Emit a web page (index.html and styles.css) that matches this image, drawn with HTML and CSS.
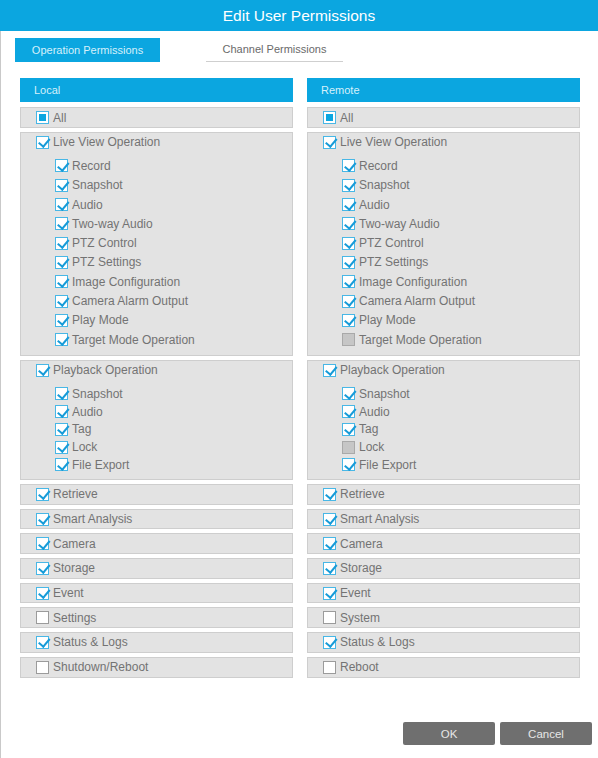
FILE: index.html
```html
<!DOCTYPE html>
<html lang="en">
<head>
  <meta charset="UTF-8" />
  <title>Edit User Permissions</title>
  <link rel="stylesheet" href="styles.css">
</head>
<body>

<div class="dialog">
  <header class="title">Edit User Permissions</header>

  <nav class="tabs">
    <span class="tab active">Operation Permissions</span>
    <span class="tab">Channel Permissions</span>
  </nav>

  <main class="columns">
    <!-- Local -->
    <section class="col">
      <div class="col-head">Local</div>
      <div class="box row"><span class="cb part"></span>All</div>

      <div class="box group live">
        <div class="item"><span class="cb on"></span>Live View Operation</div>
        <ul class="subs">
          <li class="item"><span class="cb on"></span>Record</li>
          <li class="item"><span class="cb on"></span>Snapshot</li>
          <li class="item"><span class="cb on"></span>Audio</li>
          <li class="item"><span class="cb on"></span>Two-way Audio</li>
          <li class="item"><span class="cb on"></span>PTZ Control</li>
          <li class="item"><span class="cb on"></span>PTZ Settings</li>
          <li class="item"><span class="cb on"></span>Image Configuration</li>
          <li class="item"><span class="cb on"></span>Camera Alarm Output</li>
          <li class="item"><span class="cb on"></span>Play Mode</li>
          <li class="item"><span class="cb on"></span>Target Mode Operation</li>
        </ul>
      </div>

      <div class="box group playback">
        <div class="item"><span class="cb on"></span>Playback Operation</div>
        <ul class="subs">
          <li class="item"><span class="cb on"></span>Snapshot</li>
          <li class="item"><span class="cb on"></span>Audio</li>
          <li class="item"><span class="cb on"></span>Tag</li>
          <li class="item"><span class="cb on"></span>Lock</li>
          <li class="item"><span class="cb on"></span>File Export</li>
        </ul>
      </div>

      <div class="box row"><span class="cb on"></span>Retrieve</div>
      <div class="box row"><span class="cb on"></span>Smart Analysis</div>
      <div class="box row"><span class="cb on"></span>Camera</div>
      <div class="box row"><span class="cb on"></span>Storage</div>
      <div class="box row"><span class="cb on"></span>Event</div>
      <div class="box row"><span class="cb"></span>Settings</div>
      <div class="box row"><span class="cb on"></span>Status &amp; Logs</div>
      <div class="box row"><span class="cb"></span>Shutdown/Reboot</div>
    </section>

    <!-- Remote -->
    <section class="col">
      <div class="col-head">Remote</div>
      <div class="box row"><span class="cb part"></span>All</div>

      <div class="box group live">
        <div class="item"><span class="cb on"></span>Live View Operation</div>
        <ul class="subs">
          <li class="item"><span class="cb on"></span>Record</li>
          <li class="item"><span class="cb on"></span>Snapshot</li>
          <li class="item"><span class="cb on"></span>Audio</li>
          <li class="item"><span class="cb on"></span>Two-way Audio</li>
          <li class="item"><span class="cb on"></span>PTZ Control</li>
          <li class="item"><span class="cb on"></span>PTZ Settings</li>
          <li class="item"><span class="cb on"></span>Image Configuration</li>
          <li class="item"><span class="cb on"></span>Camera Alarm Output</li>
          <li class="item"><span class="cb on"></span>Play Mode</li>
          <li class="item"><span class="cb off"></span>Target Mode Operation</li>
        </ul>
      </div>

      <div class="box group playback">
        <div class="item"><span class="cb on"></span>Playback Operation</div>
        <ul class="subs">
          <li class="item"><span class="cb on"></span>Snapshot</li>
          <li class="item"><span class="cb on"></span>Audio</li>
          <li class="item"><span class="cb on"></span>Tag</li>
          <li class="item"><span class="cb off"></span>Lock</li>
          <li class="item"><span class="cb on"></span>File Export</li>
        </ul>
      </div>

      <div class="box row"><span class="cb on"></span>Retrieve</div>
      <div class="box row"><span class="cb on"></span>Smart Analysis</div>
      <div class="box row"><span class="cb on"></span>Camera</div>
      <div class="box row"><span class="cb on"></span>Storage</div>
      <div class="box row"><span class="cb on"></span>Event</div>
      <div class="box row"><span class="cb"></span>System</div>
      <div class="box row"><span class="cb on"></span>Status &amp; Logs</div>
      <div class="box row"><span class="cb"></span>Reboot</div>
    </section>
  </main>

  <footer class="actions">
    <button type="button">OK</button>
    <button type="button">Cancel</button>
  </footer>
</div>

</body>
</html>
```

FILE: styles.css
```css
* {
  box-sizing: border-box;
}

body {
  margin: 0;
  background: #fff;
  font-family: 'Liberation Sans', Arial, sans-serif;
  color: #737373;
}

.dialog {
  height: 758px;
  display: flex;
  flex-direction: column;
  border-left: 1px solid #c9c9c9;
}

/* Barra de titulo */
.title {
  height: 31px;
  line-height: 31px;
  margin-left: -1px;
  background: #0ba6e0;
  color: #fff;
  text-align: center;
  font-size: 15.5px;
}

/* Pestañas */
.tabs {
  display: flex;
  gap: 46px;
  margin-top: 7px;
  padding-left: 14px;
}

.tab {
  height: 24px;
  line-height: 23px;
  text-align: center;
  font-size: 11px;
  color: #6a6a6a;
  width: 137px;
  border-bottom: 1px solid #cfcfcf;
}

.tab.active {
  width: 145px;
  background: #0ba6e0;
  color: #d6f0fb;
  border-bottom: none;
  line-height: 24px;
}

/* Columnas */
.columns {
  display: grid;
  grid-template-columns: 273px 273px;
  column-gap: 14px;
  margin-top: 16px;
  padding-left: 19px;
}

.col-head {
  height: 24px;
  line-height: 24px;
  padding-left: 14px;
  background: #0ba6e0;
  color: #d6f0fb;
  font-size: 11px;
}

.box {
  background: #e3e3e3;
  border: 1px solid #cecece;
  padding-left: 15px;
  font-size: 12px;
}

.box.row {
  height: 20.7px;
  margin-top: 4px;
  display: flex;
  align-items: center;
}

.col-head + .box.row {
  margin-top: 5px;
  height: 21px;
}

.group {
  margin-top: 4px;
}

.group .item {
  display: flex;
  align-items: center;
}

.group > .item {
  height: 18px;
}

.subs {
  list-style: none;
  margin: 0;
  padding: 0 0 0 19px;
}

.live {
  height: 224px;
}

.live .subs {
  margin-top: 5.3px;
}

.live .subs .item {
  height: 19.3px;
}

.playback {
  height: 120px;
}

.playback .subs {
  margin-top: 6.1px;
}

.playback .subs .item {
  height: 17.75px;
}

/* Checkboxes */
.cb {
  position: relative;
  flex: none;
  width: 13px;
  height: 13px;
  margin-right: 4px;
  background: #fff;
  border: 1px solid #9b9b9b;
}

.cb.on,
.cb.part {
  border-color: #48b7e6;
}

.cb.on::after {
  content: '';
  position: absolute;
  left: 3.5px;
  top: -0.5px;
  width: 4.5px;
  height: 8.5px;
  border-right: 2.2px solid #169bd8;
  border-bottom: 2.2px solid #169bd8;
  transform: rotate(40deg);
}

.cb.part::after {
  content: '';
  position: absolute;
  left: 2px;
  top: 2px;
  width: 7px;
  height: 7px;
  background: #0ba6e0;
}

.cb.off {
  background: #c6c6c6;
  border-color: #a9a9a9;
}

/* Botones */
.actions {
  margin-top: auto;
  display: flex;
  justify-content: flex-end;
  gap: 5px;
  padding: 0 6px 13px 0;
}

.actions button {
  width: 92px;
  height: 23px;
  border: none;
  border-radius: 2px;
  background: #6f6f6f;
  color: #e6e6e6;
  font-family: inherit;
  font-size: 11.5px;
}
```
